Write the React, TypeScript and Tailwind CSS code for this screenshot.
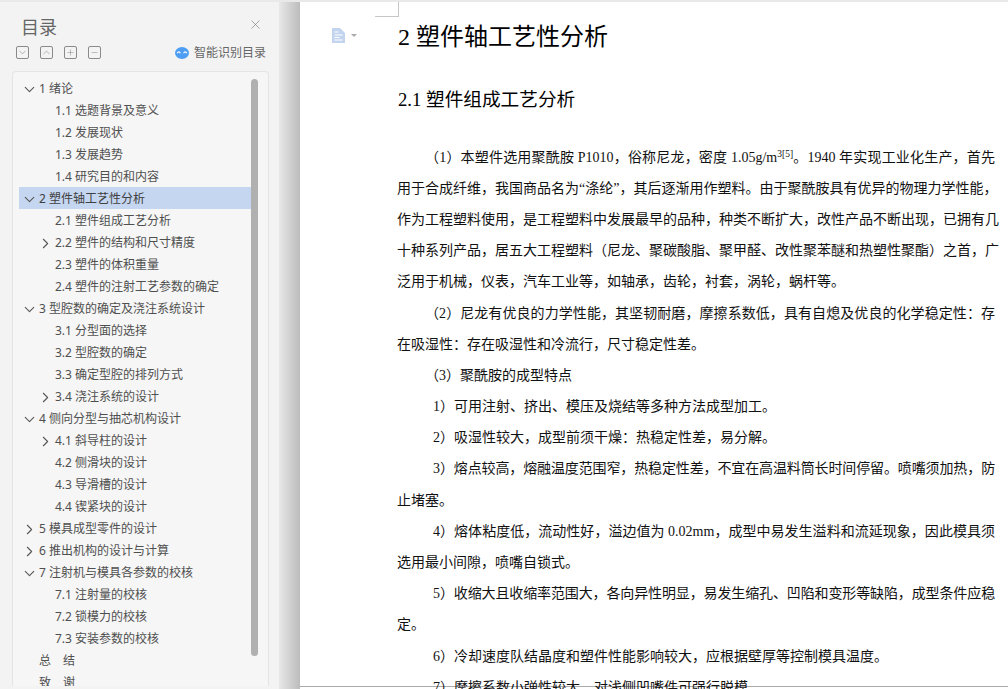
import { ChevronDown, ChevronRight, ChevronUp, Plus, Minus, X } from "lucide-react";

type Row = { t: string; level: 1 | 2; open?: boolean; closed?: boolean; active?: boolean };

const rows: Row[] = [
  { t: "1 绪论", level: 1, open: true },
  { t: "1.1 选题背景及意义", level: 2 },
  { t: "1.2 发展现状", level: 2 },
  { t: "1.3 发展趋势", level: 2 },
  { t: "1.4 研究目的和内容", level: 2 },
  { t: "2 塑件轴工艺性分析", level: 1, open: true, active: true },
  { t: "2.1 塑件组成工艺分析", level: 2 },
  { t: "2.2 塑件的结构和尺寸精度", level: 2, closed: true },
  { t: "2.3 塑件的体积重量", level: 2 },
  { t: "2.4 塑件的注射工艺参数的确定", level: 2 },
  { t: "3 型腔数的确定及浇注系统设计", level: 1, open: true },
  { t: "3.1 分型面的选择", level: 2 },
  { t: "3.2 型腔数的确定", level: 2 },
  { t: "3.3 确定型腔的排列方式", level: 2 },
  { t: "3.4 浇注系统的设计", level: 2, closed: true },
  { t: "4 侧向分型与抽芯机构设计", level: 1, open: true },
  { t: "4.1 斜导柱的设计", level: 2, closed: true },
  { t: "4.2 侧滑块的设计", level: 2 },
  { t: "4.3 导滑槽的设计", level: 2 },
  { t: "4.4 锲紧块的设计", level: 2 },
  { t: "5 模具成型零件的设计", level: 1, closed: true },
  { t: "6 推出机构的设计与计算", level: 1, closed: true },
  { t: "7 注射机与模具各参数的校核", level: 1, open: true },
  { t: "7.1 注射量的校核", level: 2 },
  { t: "7.2 锁模力的校核", level: 2 },
  { t: "7.3 安装参数的校核", level: 2 },
  { t: "总　结", level: 1 },
  { t: "致　谢", level: 1 },
];

function TocRow({ r }: { r: Row }) {
  const Icon = r.open ? ChevronDown : r.closed ? ChevronRight : null;
  return (
    <div
      className={`flex h-[22px] shrink-0 items-center whitespace-pre pt-[2px] text-[12px] leading-[20px] text-[#4f4f4f] ${
        r.active ? "bg-[#c5d6f0] text-[#404040]" : ""
      } ${r.level === 1 ? "pl-[4px]" : "pl-[20px]"}`}
    >
      <span className="flex w-[16px] shrink-0 items-center">
        {Icon && <Icon size={17} strokeWidth={1.5} className="ml-[-2.5px] shrink-0 text-[#555555]" />}
      </span>
      <span>{r.t}</span>
    </div>
  );
}

function ToolBtn({ children }: { children: React.ReactNode }) {
  return (
    <span className="flex h-[13px] w-[13px] items-center justify-center rounded-[2px] border border-[#8a8a8a] text-[#777777]">
      {children}
    </span>
  );
}

function L({ children, end, indent, num, tight }: { children: React.ReactNode; end?: boolean; indent?: boolean; num?: boolean; tight?: boolean }) {
  return (
    <div
      className={`h-[31.2px] whitespace-nowrap leading-[31.2px] ${end ? "" : "text-justify [text-align-last:justify]"} ${
        num ? "pl-[36px]" : indent ? "pl-[28px]" : ""
      } ${tight ? "tracking-[-0.13px]" : ""}`}
    >
      {children}
    </div>
  );
}

export default function App() {
  return (
    <div className="flex h-[689px] w-[1008px] flex-col overflow-hidden bg-white font-['Noto_Sans','Noto_Sans_CJK_SC',sans-serif]">
      <div className="h-[2px] shrink-0 bg-[#e9e9e9]" />
      <div className="flex min-h-0 flex-1">
        <aside className="flex w-[279px] shrink-0 flex-col bg-[#f3f3f3] pl-[12px] pr-[10px]">
          <div className="flex h-[36px] shrink-0 items-center justify-between pl-[10px] pt-[14px]">
            <span className="ml-[-1px] text-[18px] leading-[24px] text-[#666666]">目录</span>
            <X size={15} strokeWidth={1} className="mr-[6px] mt-[-5px] text-[#777777]" />
          </div>
          <div className="mt-[8px] flex h-[13px] shrink-0 items-center pl-[4px]">
            <div className="flex gap-[11px]">
              <ToolBtn><ChevronDown size={11} strokeWidth={1.1} /></ToolBtn>
              <ToolBtn><ChevronUp size={11} strokeWidth={1.1} /></ToolBtn>
              <ToolBtn><Plus size={9} strokeWidth={1.2} /></ToolBtn>
              <ToolBtn><Minus size={9} strokeWidth={1.2} /></ToolBtn>
            </div>
            <div className="ml-auto flex items-center gap-[5px] pr-[3px] text-[12px] text-[#666666]">
              <svg width="14" height="12" viewBox="0 0 14 12">
                <ellipse cx="7" cy="6" rx="7" ry="6" fill="#4d9df5" />
                <path d="M2.2 6.2C3 4.4 4.6 4.4 5.4 6.2M8.6 6.2C9.4 4.4 11 4.4 11.8 6.2" stroke="#ffffff" strokeWidth="1.1" fill="none" />
              </svg>
              <span>智能识别目录</span>
            </div>
          </div>
          <div className="mt-[12px] flex min-h-0 flex-1 rounded-t-[4px] border border-b-0 border-[#e4e4e4] bg-[#f6f6f6] pl-[6px] pr-[10px] pt-[5px]">
            <div className="flex w-[232px] shrink-0 flex-col overflow-hidden">
              {rows.map((r) => (
                <TocRow key={r.t} r={r} />
              ))}
            </div>
            <div className="mt-[2px] h-[577px] w-[7px] shrink-0 rounded-full bg-[#b0b0b0]" />
          </div>
        </aside>
        <div className="w-[21px] shrink-0 bg-gradient-to-r from-[#e8e8e8] to-[#bcbcbc]" />
        <main className="relative flex min-w-0 flex-1 flex-col pl-[97px] pr-[13px] font-['Liberation_Serif','Noto_Sans_CJK_SC',serif] text-[14px] text-[#111111]">
          <div className="absolute left-[75px] top-0 h-[15px] w-[24px] border-b border-r border-[#c6c6c6]" />
          <div className="absolute left-[32px] top-[26px] flex items-center gap-[6px]">
            <svg width="13" height="15" viewBox="0 0 13 15">
              <path d="M0 0h8l5 5v10H0z" fill="#c3d5ee" />
              <path d="M2.5 4h4M2.5 7h8M2.5 9.5h5M2.5 12h8" stroke="#ffffff" strokeWidth="1" />
            </svg>
            <span className="h-0 w-0 border-x-[3px] border-t-[3px] border-x-transparent border-t-[#aaaaaa]" />
          </div>
          <h1 className="ml-[1px] mt-[19px] h-[32px] whitespace-nowrap text-[24px] font-normal leading-[32px] text-black">2 塑件轴工艺性分析</h1>
          <h2 className="ml-[1px] mt-[34px] h-[26px] whitespace-nowrap text-[18.67px] font-normal leading-[26px] text-black">2.1 塑件组成工艺分析</h2>
          <div className="mt-[28.6px] shrink-0">
            <L indent>（1）本塑件选用聚酰胺 P1010，俗称尼龙，密度 1.05g/m<sup className="text-[9.5px]">3[5]</sup>。1940 年实现工业化生产，首先</L>
            <L>用于合成纤维，我国商品名为“涤纶”，其后逐渐用作塑料。由于聚酰胺具有优异的物理力学性能，</L>
            <L>作为工程塑料使用，是工程塑料中发展最早的品种，种类不断扩大，改性产品不断出现，已拥有几</L>
            <L>十种系列产品，居五大工程塑料（尼龙、聚碳酸脂、聚甲醛、改性聚苯醚和热塑性聚酯）之首，广</L>
            <L end>泛用于机械，仪表，汽车工业等，如轴承，齿轮，衬套，涡轮，蜗杆等。</L>
            <L indent>（2）尼龙有优良的力学性能，其坚韧耐磨，摩擦系数低，具有自熄及优良的化学稳定性：存</L>
            <L end>在吸湿性：存在吸湿性和冷流行，尺寸稳定性差。</L>
            <L indent end>（3）聚酰胺的成型特点</L>
            <L num end>1）可用注射、挤出、模压及烧结等多种方法成型加工。</L>
            <L num end>2）吸湿性较大，成型前须干燥：热稳定性差，易分解。</L>
            <L num tight>3）熔点较高，熔融温度范围窄，热稳定性差，不宜在高温料筒长时间停留。喷嘴须加热，防</L>
            <L end>止堵塞。</L>
            <L num>4）熔体粘度低，流动性好，溢边值为 0.02mm，成型中易发生溢料和流延现象，因此模具须</L>
            <L end>选用最小间隙，喷嘴自锁式。</L>
            <L num tight>5）收缩大且收缩率范围大，各向异性明显，易发生缩孔、凹陷和变形等缺陷，成型条件应稳</L>
            <L end>定。</L>
            <L num end>6）冷却速度队结晶度和塑件性能影响较大，应根据壁厚等控制模具温度。</L>
            <L num end>7）摩擦系数小弹性较大，对浅侧凹嘴件可强行脱模。</L>
          </div>
        </main>
      </div>
      <div className="flex h-[3px] shrink-0">
        <div className="w-[279px] bg-[#f3f3f3]" />
        <div className="w-[21px] bg-gradient-to-r from-[#e8e8e8] to-[#bcbcbc]" />
        <div className="flex-1 border-t border-[#aaaaaa] bg-white" />
      </div>
    </div>
  );
}
